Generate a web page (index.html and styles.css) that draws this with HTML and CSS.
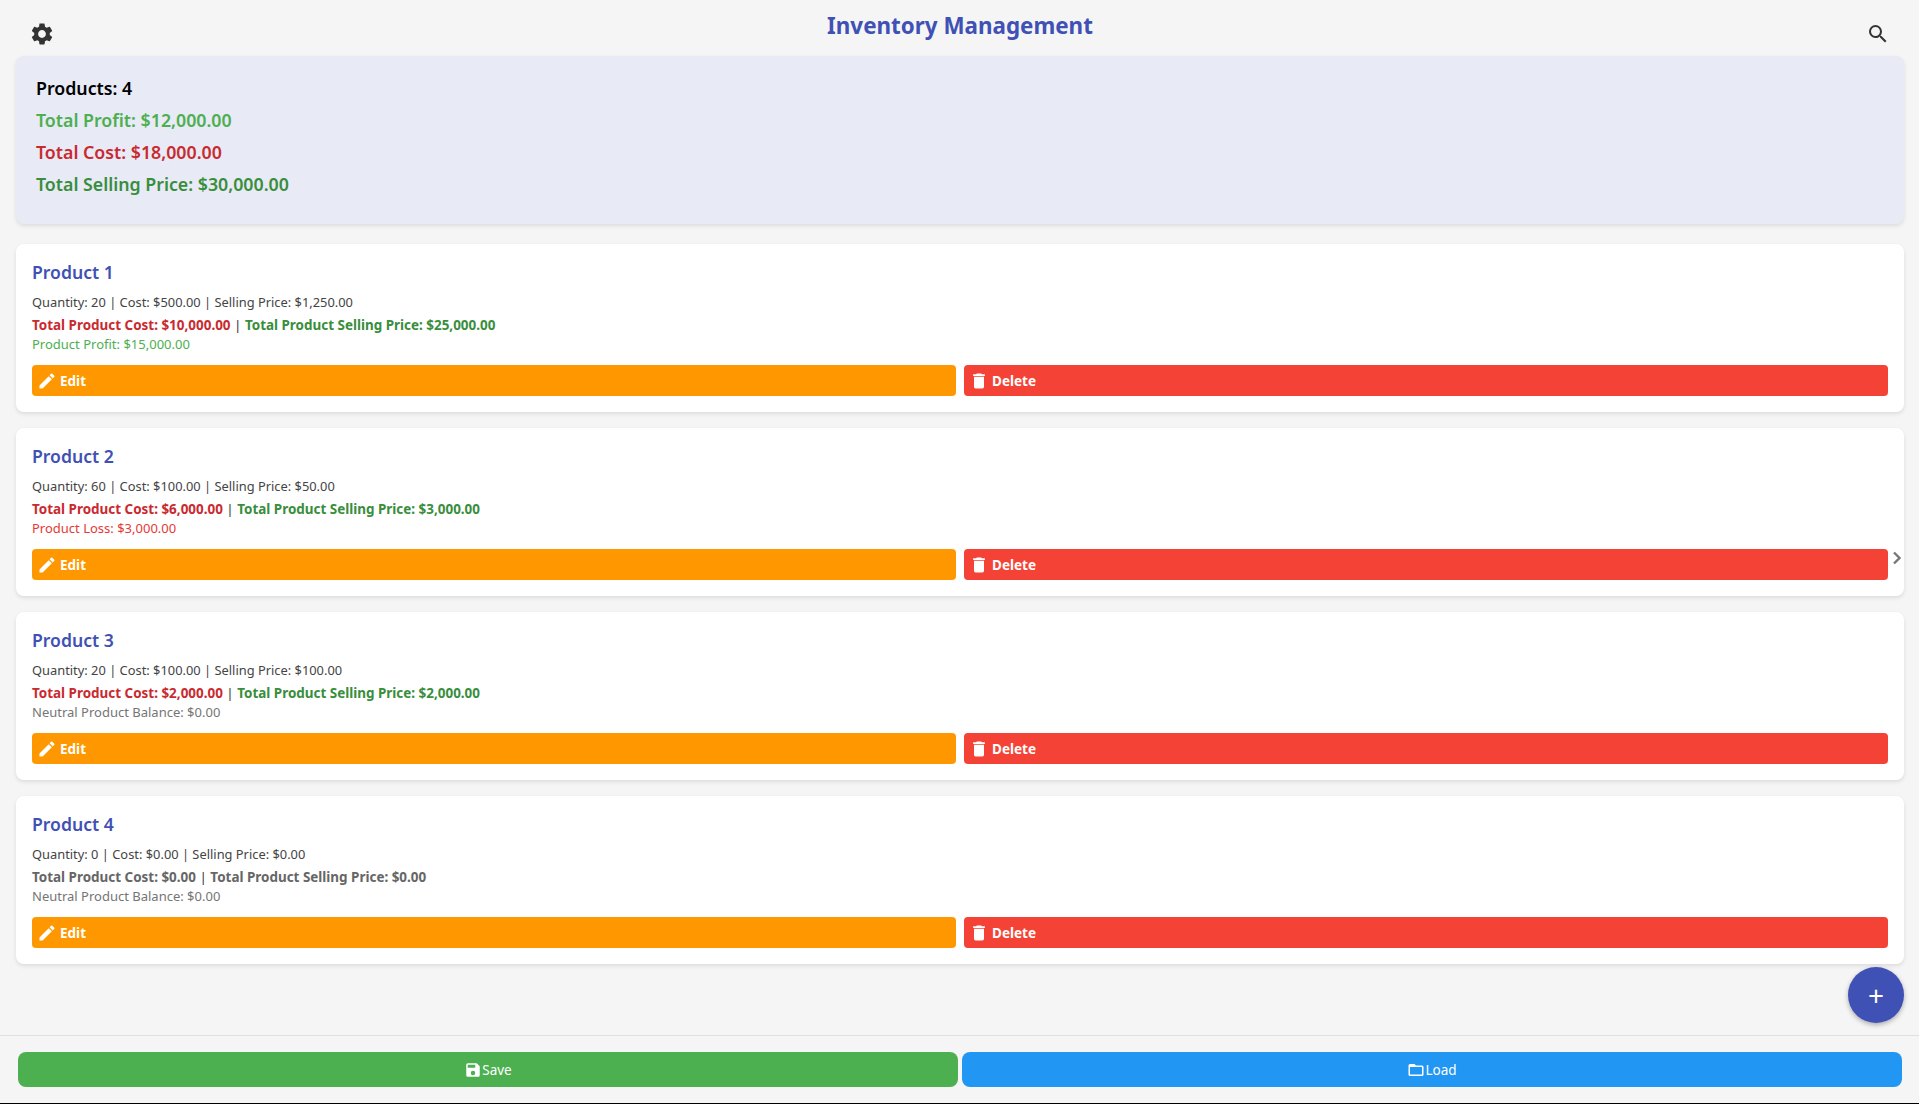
FILE: index.html
```html
<!DOCTYPE html>
<html lang="en">
<head>
<meta charset="utf-8">
<title>Inventory Management</title>
<link rel="stylesheet" href="styles.css">
</head>
<body>
<div class="app">
  <header class="header">
    <button class="icon-btn gear" aria-label="Settings">
      <svg width="26" height="26" viewBox="0 0 24 24" fill="#333"><path d="M19.14 12.94c.04-.3.06-.61.06-.94 0-.32-.02-.64-.07-.94l2.03-1.58a.49.49 0 0 0 .12-.61l-1.92-3.32a.488.488 0 0 0-.59-.22l-2.39.96c-.5-.38-1.03-.7-1.62-.94l-.36-2.54a.484.484 0 0 0-.48-.41h-3.84c-.24 0-.43.17-.47.41l-.36 2.54c-.59.24-1.13.57-1.62.94l-2.39-.96c-.22-.08-.47 0-.59.22L2.74 8.87c-.12.21-.08.47.12.61l2.03 1.58c-.05.3-.09.63-.09.94s.02.64.07.94l-2.03 1.58a.49.49 0 0 0-.12.61l1.92 3.32c.12.22.37.29.59.22l2.39-.96c.5.38 1.03.7 1.62.94l.36 2.54c.05.24.24.41.48.41h3.84c.24 0 .44-.17.47-.41l.36-2.54c.59-.24 1.13-.56 1.62-.94l2.39.96c.22.08.47 0 .59-.22l1.92-3.32c.12-.22.07-.47-.12-.61l-2.01-1.58zM12 15.6c-1.98 0-3.6-1.62-3.6-3.6s1.62-3.6 3.6-3.6 3.6 1.62 3.6 3.6-1.62 3.6-3.6 3.6z"/></svg>
    </button>
    <h1 class="title">Inventory Management</h1>
    <button class="icon-btn search" aria-label="Search">
      <svg width="24" height="24" viewBox="0 0 24 24" fill="#333"><path d="M15.5 14h-.79l-.28-.27A6.47 6.47 0 0 0 16 9.5 6.5 6.5 0 1 0 9.5 16c1.61 0 3.09-.59 4.23-1.57l.27.28v.79l5 4.99L20.49 19l-4.99-5zm-6 0C7.01 14 5 11.99 5 9.5S7.01 5 9.5 5 14 7.01 14 9.5 11.99 14 9.5 14z"/></svg>
    </button>
  </header>

  <main class="main">
    <section class="summary">
      <p class="summary-line count">Products: 4</p>
      <p class="summary-line profit">Total Profit: $12,000.00</p>
      <p class="summary-line cost">Total Cost: $18,000.00</p>
      <p class="summary-line selling">Total Selling Price: $30,000.00</p>
    </section>

    <article class="card">
      <h2 class="name">Product 1</h2>
      <p class="details">Quantity: 20 | Cost: $500.00 | Selling Price: $1,250.00</p>
      <p class="totals"><b class="t-cost">Total Product Cost: $10,000.00</b> | <b class="t-sell">Total Product Selling Price: $25,000.00</b></p>
      <p class="balance b-profit">Product Profit: $15,000.00</p>
      <div class="actions">
        <button class="btn edit"><svg class="ico" viewBox="0 0 24 24"><path d="M3 17.25V21h3.75L17.81 9.94l-3.75-3.75L3 17.25zM20.71 7.04a1 1 0 0 0 0-1.41l-2.34-2.34a1 1 0 0 0-1.41 0l-1.83 1.83 3.75 3.75 1.83-1.83z"/></svg>Edit</button>
        <button class="btn del"><svg class="ico" viewBox="0 0 24 24"><path d="M6 19c0 1.1.9 2 2 2h8c1.1 0 2-.9 2-2V7H6v12zM19 4h-3.5l-1-1h-5l-1 1H5v2h14V4z"/></svg>Delete</button>
      </div>
    </article>

    <article class="card">
      <h2 class="name">Product 2</h2>
      <p class="details">Quantity: 60 | Cost: $100.00 | Selling Price: $50.00</p>
      <p class="totals"><b class="t-cost">Total Product Cost: $6,000.00</b> | <b class="t-sell">Total Product Selling Price: $3,000.00</b></p>
      <p class="balance b-loss">Product Loss: $3,000.00</p>
      <div class="actions">
        <button class="btn edit"><svg class="ico" viewBox="0 0 24 24"><path d="M3 17.25V21h3.75L17.81 9.94l-3.75-3.75L3 17.25zM20.71 7.04a1 1 0 0 0 0-1.41l-2.34-2.34a1 1 0 0 0-1.41 0l-1.83 1.83 3.75 3.75 1.83-1.83z"/></svg>Edit</button>
        <button class="btn del"><svg class="ico" viewBox="0 0 24 24"><path d="M6 19c0 1.1.9 2 2 2h8c1.1 0 2-.9 2-2V7H6v12zM19 4h-3.5l-1-1h-5l-1 1H5v2h14V4z"/></svg>Delete</button>
      </div>
      <svg class="chevron" width="12" height="16" viewBox="0 0 12 16"><path d="M3 2.5 8.5 8 3 13.5" fill="none" stroke="#777" stroke-width="2.4"/></svg>
    </article>

    <article class="card">
      <h2 class="name">Product 3</h2>
      <p class="details">Quantity: 20 | Cost: $100.00 | Selling Price: $100.00</p>
      <p class="totals"><b class="t-cost">Total Product Cost: $2,000.00</b> | <b class="t-sell">Total Product Selling Price: $2,000.00</b></p>
      <p class="balance b-neutral">Neutral Product Balance: $0.00</p>
      <div class="actions">
        <button class="btn edit"><svg class="ico" viewBox="0 0 24 24"><path d="M3 17.25V21h3.75L17.81 9.94l-3.75-3.75L3 17.25zM20.71 7.04a1 1 0 0 0 0-1.41l-2.34-2.34a1 1 0 0 0-1.41 0l-1.83 1.83 3.75 3.75 1.83-1.83z"/></svg>Edit</button>
        <button class="btn del"><svg class="ico" viewBox="0 0 24 24"><path d="M6 19c0 1.1.9 2 2 2h8c1.1 0 2-.9 2-2V7H6v12zM19 4h-3.5l-1-1h-5l-1 1H5v2h14V4z"/></svg>Delete</button>
      </div>
    </article>

    <article class="card">
      <h2 class="name">Product 4</h2>
      <p class="details">Quantity: 0 | Cost: $0.00 | Selling Price: $0.00</p>
      <p class="totals"><b class="t-zero">Total Product Cost: $0.00</b> | <b class="t-zero">Total Product Selling Price: $0.00</b></p>
      <p class="balance b-neutral">Neutral Product Balance: $0.00</p>
      <div class="actions">
        <button class="btn edit"><svg class="ico" viewBox="0 0 24 24"><path d="M3 17.25V21h3.75L17.81 9.94l-3.75-3.75L3 17.25zM20.71 7.04a1 1 0 0 0 0-1.41l-2.34-2.34a1 1 0 0 0-1.41 0l-1.83 1.83 3.75 3.75 1.83-1.83z"/></svg>Edit</button>
        <button class="btn del"><svg class="ico" viewBox="0 0 24 24"><path d="M6 19c0 1.1.9 2 2 2h8c1.1 0 2-.9 2-2V7H6v12zM19 4h-3.5l-1-1h-5l-1 1H5v2h14V4z"/></svg>Delete</button>
      </div>
    </article>
  </main>

  <button class="fab" aria-label="Add">+</button>

  <footer class="footer">
    <button class="foot-btn save"><svg class="foot-ico" viewBox="0 0 24 24"><path d="M17 3H5a2 2 0 0 0-2 2v14a2 2 0 0 0 2 2h14a2 2 0 0 0 2-2V7l-4-4zm-5 16a3 3 0 1 1 0-6 3 3 0 0 1 0 6zm3-10H5V5h10v4z"/></svg>Save</button>
    <button class="foot-btn load"><svg class="foot-ico" viewBox="0 0 24 24"><path d="M20 6h-8l-2-2H4a2 2 0 0 0-2 2v12a2 2 0 0 0 2 2h16a2 2 0 0 0 2-2V8a2 2 0 0 0-2-2zm0 12H4V8h16v10z"/></svg>Load</button>
  </footer>
</div>
</body>
</html>
```
FILE: styles.css
```css
* { box-sizing: border-box; }
html, body { margin: 0; height: 100%; }
body { background: #000; font-family: "Noto Sans", "Open Sans", sans-serif; color: #333; }
p, h1, h2 { margin: 0; }
button { font-family: inherit; border: 0; cursor: pointer; }

.app { position: relative; height: 1103px; background: #f5f5f5; display: flex; flex-direction: column; overflow: hidden; }

.header { height: 56px; flex: none; display: flex; justify-content: space-between; align-items: flex-start; padding: 0 29px; position: relative; }
.icon-btn { padding: 0; background: none; display: flex; }
.gear { margin-top: 21px; }
.search { margin-top: 22px; }
.title { position: absolute; left: 1px; right: 0; top: 9px; text-align: center; font-size: 22.4px; line-height: 34px; font-weight: 700; color: #3f51b5; }

.main { flex: 1; padding: 0 15px 0 16px; display: flex; flex-direction: column; gap: 16px; }

.summary { height: 168px; background: #e8eaf6; border-radius: 8px; padding: 16px 20px; margin-bottom: 4px; display: flex; flex-direction: column; box-shadow: 0 2px 4px rgba(0,0,0,.1); }
.summary-line { font-size: 17.76px; font-weight: 600; line-height: 32px; }
.count { color: #000; }
.profit { color: #4caf50; }
.cost { color: #c92a2f; }
.selling { color: #388e3c; }

.card { position: relative; height: 168px; background: #fff; border-radius: 8px; padding: 15px 16px 16px; box-shadow: 0 2px 4px rgba(0,0,0,.1); display: flex; flex-direction: column; }
.name { font-size: 17.6px; font-weight: 600; line-height: 27px; color: #3f51b5; margin-bottom: 6px; }
.details { font-size: 12.87px; line-height: 20px; color: #444; margin-bottom: 3px; }
.totals { font-size: 13.45px; line-height: 20px; color: #333; }
.totals b { font-weight: 700; }
.t-cost { color: #c92a2f; }
.t-sell { color: #388e3c; }
.t-zero { color: #666; }
.balance { font-size: 13px; line-height: 18px; }
.b-profit { color: #4caf50; }
.b-loss { color: #e53935; }
.b-neutral { color: #757575; }

.actions { display: flex; gap: 8px; margin-top: auto; }
.btn { flex: 1; height: 31px; border-radius: 4px; color: #fff; font-size: 13.5px; font-weight: 700; display: flex; align-items: center; gap: 3px; padding: 0 5px; }
.ico { width: 20px; height: 20px; fill: #fff; flex: none; }
.edit { background: #ff9800; }
.del { background: #f44336; }

.chevron { position: absolute; right: 1px; top: 122px; }

.fab { position: absolute; right: 15px; top: 967px; width: 56px; height: 56px; border-radius: 50%; background: #3f51b5; color: #fff; font-size: 28px; line-height: 56px; padding: 0; box-shadow: 0 2px 5px rgba(0,0,0,.3); }

.footer { flex: none; height: 68px; border-top: 1px solid #e0e0e0; display: flex; gap: 4px; padding: 16px 17px 16px 18px; }
.foot-btn { flex: 1; height: 35px; border-radius: 8px; color: #fff; font-size: 13.5px; display: flex; justify-content: center; align-items: center; padding: 0; }
.foot-ico { width: 18px; height: 18px; fill: #fff; }
.save { background: #4caf50; }
.load { background: #2196f3; }
```
